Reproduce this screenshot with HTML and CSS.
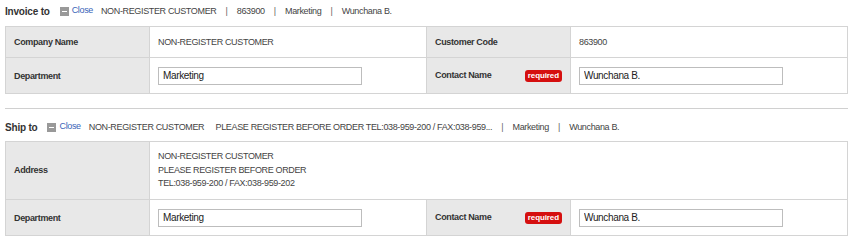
FILE: index.html
```html
<!DOCTYPE html>
<html lang="en">
<head>
    <meta charset="UTF-8">
    <title>Invoice / Ship to</title>
    <link rel="stylesheet" href="styles.css">
</head>
<body>
    <div class="page">
        <div class="section">
            <div class="section-head">
                <span class="section-title">Invoice to</span>
                <a class="toggle" href="#"><span class="toggle-icon"></span>Close</a>
                <span class="summary">
                    <span>NON-REGISTER CUSTOMER</span>
                    <span class="sep">|</span>
                    <span>863900</span>
                    <span class="sep">|</span>
                    <span>Marketing</span>
                    <span class="sep">|</span>
                    <span>Wunchana B.</span>
                </span>
            </div>
            <table class="form-table">
                <colgroup>
                    <col class="col-label"><col class="col-value"><col class="col-label"><col class="col-value">
                </colgroup>
                <tr class="row-short">
                    <th>Company Name</th>
                    <td>NON-REGISTER CUSTOMER</td>
                    <th>Customer Code</th>
                    <td>863900</td>
                </tr>
                <tr class="row-input">
                    <th>Department</th>
                    <td><input class="text-input" type="text" value="Marketing"></td>
                    <th>Contact Name <span class="required">required</span></th>
                    <td><input class="text-input" type="text" value="Wunchana B."></td>
                </tr>
            </table>
        </div>

        <div class="divider"></div>

        <div class="section section-ship">
            <div class="section-head">
                <span class="section-title">Ship to</span>
                <a class="toggle" href="#"><span class="toggle-icon"></span>Close</a>
                <span class="summary">
                    <span>NON-REGISTER CUSTOMER</span>
                    <span class="gap"></span>
                    <span>PLEASE REGISTER BEFORE ORDER TEL:038-959-200 / FAX:038-959...</span>
                    <span class="sep">|</span>
                    <span>Marketing</span>
                    <span class="sep">|</span>
                    <span>Wunchana B.</span>
                </span>
            </div>
            <table class="form-table">
                <colgroup>
                    <col class="col-label"><col class="col-value"><col class="col-label"><col class="col-value">
                </colgroup>
                <tr class="row-address">
                    <th>Address</th>
                    <td colspan="3">
                        NON-REGISTER CUSTOMER<br>
                        PLEASE REGISTER BEFORE ORDER<br>
                        TEL:038-959-200 / FAX:038-959-202
                    </td>
                </tr>
                <tr class="row-input">
                    <th>Department</th>
                    <td><input class="text-input" type="text" value="Marketing"></td>
                    <th>Contact Name <span class="required">required</span></th>
                    <td><input class="text-input" type="text" value="Wunchana B."></td>
                </tr>
            </table>
        </div>
    </div>
</body>
</html>
```

FILE: styles.css
```css
* {
    margin: 0;
    padding: 0;
    box-sizing: border-box;
}

body {
    font-family: 'Liberation Sans', Arial, sans-serif;
    font-size: 9px;
    letter-spacing: -0.35px;
    color: #444;
    background: #fff;
}

.page {
    padding: 0 5px;
    width: 853px;
}

.section-head {
    display: flex;
    align-items: center;
    height: 22px;
    margin-bottom: 4px;
    white-space: nowrap;
}

.section-ship .section-head {
    margin-bottom: 3px;
}

.section-title {
    font-size: 10px;
    letter-spacing: -0.2px;
    font-weight: bold;
    color: #333;
    margin-right: 10px;
}

.toggle {
    display: flex;
    align-items: center;
    color: #3a64b8;
    text-decoration: none;
    font-size: 9px;
    margin-right: 8px;
    position: relative;
    top: -1px;
}

.toggle-icon {
    width: 9px;
    height: 9px;
    background: #999;
    margin-right: 3px;
    position: relative;
    top: 1px;
}

.toggle-icon::after {
    content: "";
    position: absolute;
    left: 2px;
    right: 2px;
    top: 4px;
    height: 1px;
    background: #fff;
}

.summary {
    color: #444;
}

.sep {
    margin: 0 7px;
    color: #666;
}

.gap {
    display: inline-block;
    width: 7px;
}

.form-table {
    width: 842px;
    border-collapse: collapse;
    table-layout: fixed;
}

.col-label {
    width: 144px;
}

.col-value {
    width: 277px;
}

.form-table th,
.form-table td {
    border: 1px solid #d4d4d4;
    padding: 0 8px;
    text-align: left;
    vertical-align: middle;
}

.form-table th {
    background: #e8e8e8;
    color: #333;
    font-weight: bold;
}

.form-table td {
    background: #fff;
    color: #444;
}

.row-short th,
.row-short td {
    height: 31px;
}

.row-input th,
.row-input td {
    height: 36px;
}

.row-address th,
.row-address td {
    height: 58px;
    line-height: 13.5px;
}

.required {
    float: right;
    background: #d50f0f;
    color: #fff;
    font-size: 8px;
    letter-spacing: -0.1px;
    font-weight: bold;
    line-height: 12px;
    padding: 0 3px;
    border-radius: 3px;
}

.text-input {
    width: 204px;
    height: 18px;
    border: 1px solid #bdbdbd;
    padding: 0 4px;
    font-family: 'Liberation Sans', Arial, sans-serif;
    font-size: 10px;
    letter-spacing: -0.35px;
    color: #222;
    background: #fff;
    outline: none;
}

.divider {
    height: 1px;
    background: #d0d0d0;
    margin: 14px 0 7px;
}
```
